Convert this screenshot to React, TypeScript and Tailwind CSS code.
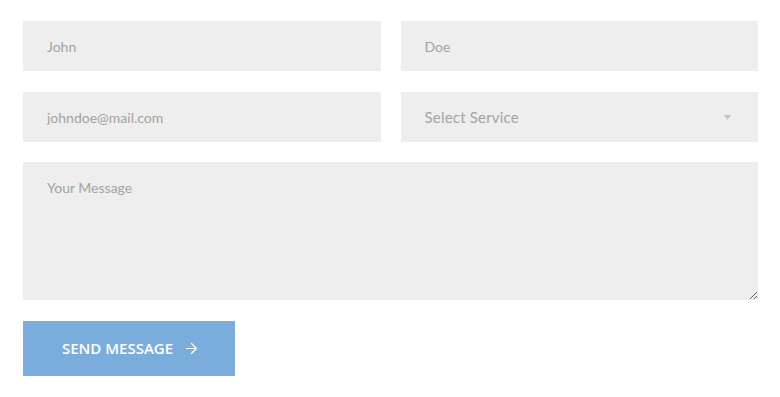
import { ArrowRight } from "lucide-react";

export default function App() {
  const field =
    "h-[50px] w-full bg-[#eeeeee] px-6 text-[14px] text-[#555] outline-none placeholder:text-[#a3a3a3]";

  return (
    <div
      className="w-[780px] h-[397px] bg-white pl-[23px] pr-[22px] pt-[21px]"
      style={{ fontFamily: "Lato, 'Open Sans', sans-serif" }}
    >
      <form className="flex flex-col gap-[21px]">
        <div className="grid grid-cols-2 gap-5">
          <input className={field} placeholder="John" />
          <input className={field} placeholder="Doe" />
        </div>

        <div className="grid grid-cols-2 gap-5">
          <input className={field} placeholder="johndoe@mail.com" />
          <div className="relative">
            <select
              defaultValue=""
              className="h-[50px] w-full appearance-none bg-[#eeeeee] px-6 text-[15px] tracking-[0.2px] text-[#a3a3a3] outline-none"
            >
              <option value="" disabled>
                Select Service
              </option>
              <option>Consulting</option>
              <option>Development</option>
            </select>
            <svg
              className="pointer-events-none absolute right-[27px] top-[23px]"
              width="7"
              height="5"
              viewBox="0 0 7 5"
            >
              <path d="M0 0h7L3.5 5z" fill="#c4c4c4" />
            </svg>
          </div>
        </div>

        <textarea
          className="-mt-[1px] h-[138px] w-full bg-[#eeeeee] px-6 pt-[15px] text-[14px] text-[#555] outline-none placeholder:text-[#a3a3a3]"
          placeholder="Your Message"
        />

        <div>
          <button
            type="button"
            className="flex h-[55px] w-[212px] items-center justify-center gap-[10px] bg-[#7aacdc] pl-[4px] font-['Open_Sans',sans-serif] text-[15px] font-semibold text-white"
          >
            SEND MESSAGE
            <ArrowRight size={17} strokeWidth={1.7} />
          </button>
        </div>
      </form>
    </div>
  );
}
